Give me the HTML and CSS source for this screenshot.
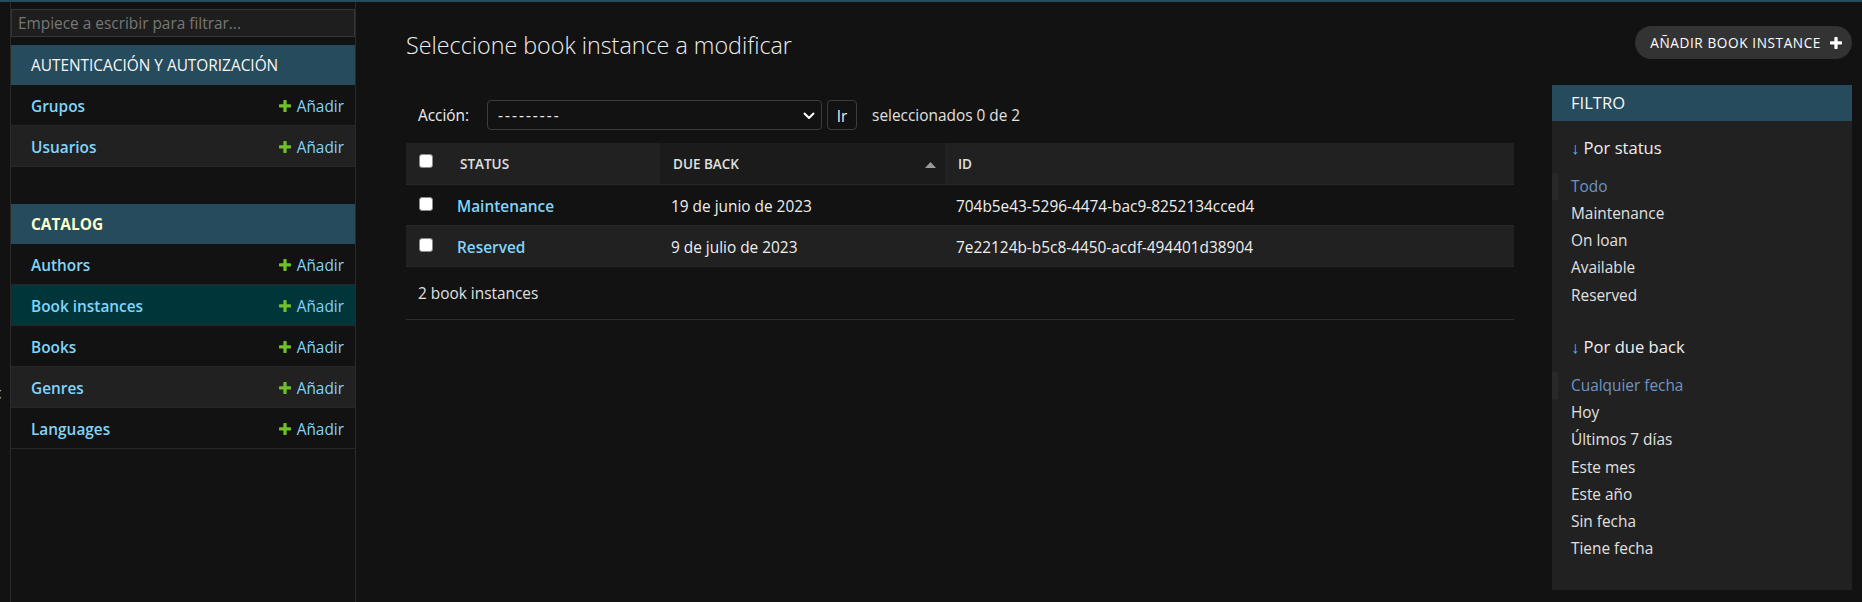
FILE: index.html
```html
<!DOCTYPE html>
<html lang="es">
<head>
<meta charset="utf-8">
<title>Seleccione book instance a modificar</title>
<link rel="stylesheet" href="styles.css">
</head>
<body>
<div class="topbar"></div>
<div class="page">
  <div class="nav-toggle"><span class="toggle-glyph">«</span></div>
  <nav class="sidebar">
    <input class="nav-filter" type="search" placeholder="Empiece a escribir para filtrar...">
    <div class="module">
      <div class="caption">AUTENTICACIÓN Y AUTORIZACIÓN</div>
      <div class="mrow"><a class="model">Grupos</a><a class="addlink"><svg viewBox="192 192 1408 1408"><path d="M1600 796v192q0 40-28 68t-68 28h-416v416q0 40-28 68t-68 28h-192q-40 0-68-28t-28-68v-416h-416q-40 0-68-28t-28-68v-192q0-40 28-68t68-28h416v-416q0-40 28-68t68-28h192q40 0 68 28t28 68v416h416q40 0 68 28t28 68z"/></svg>Añadir</a></div>
      <div class="mrow"><a class="model">Usuarios</a><a class="addlink"><svg viewBox="192 192 1408 1408"><path d="M1600 796v192q0 40-28 68t-68 28h-416v416q0 40-28 68t-68 28h-192q-40 0-68-28t-28-68v-416h-416q-40 0-68-28t-28-68v-192q0-40 28-68t68-28h416v-416q0-40 28-68t68-28h192q40 0 68 28t28 68v416h416q40 0 68 28t28 68z"/></svg>Añadir</a></div>
    </div>
    <div class="module">
      <div class="caption current">CATALOG</div>
      <div class="mrow"><a class="model">Authors</a><a class="addlink"><svg viewBox="192 192 1408 1408"><path d="M1600 796v192q0 40-28 68t-68 28h-416v416q0 40-28 68t-68 28h-192q-40 0-68-28t-28-68v-416h-416q-40 0-68-28t-28-68v-192q0-40 28-68t68-28h416v-416q0-40 28-68t68-28h192q40 0 68 28t28 68v416h416q40 0 68 28t28 68z"/></svg>Añadir</a></div>
      <div class="mrow current"><a class="model">Book instances</a><a class="addlink"><svg viewBox="192 192 1408 1408"><path d="M1600 796v192q0 40-28 68t-68 28h-416v416q0 40-28 68t-68 28h-192q-40 0-68-28t-28-68v-416h-416q-40 0-68-28t-28-68v-192q0-40 28-68t68-28h416v-416q0-40 28-68t68-28h192q40 0 68 28t28 68v416h416q40 0 68 28t28 68z"/></svg>Añadir</a></div>
      <div class="mrow"><a class="model">Books</a><a class="addlink"><svg viewBox="192 192 1408 1408"><path d="M1600 796v192q0 40-28 68t-68 28h-416v416q0 40-28 68t-68 28h-192q-40 0-68-28t-28-68v-416h-416q-40 0-68-28t-28-68v-192q0-40 28-68t68-28h416v-416q0-40 28-68t68-28h192q40 0 68 28t28 68v416h416q40 0 68 28t28 68z"/></svg>Añadir</a></div>
      <div class="mrow"><a class="model">Genres</a><a class="addlink"><svg viewBox="192 192 1408 1408"><path d="M1600 796v192q0 40-28 68t-68 28h-416v416q0 40-28 68t-68 28h-192q-40 0-68-28t-28-68v-416h-416q-40 0-68-28t-28-68v-192q0-40 28-68t68-28h416v-416q0-40 28-68t68-28h192q40 0 68 28t28 68v416h416q40 0 68 28t28 68z"/></svg>Añadir</a></div>
      <div class="mrow"><a class="model">Languages</a><a class="addlink"><svg viewBox="192 192 1408 1408"><path d="M1600 796v192q0 40-28 68t-68 28h-416v416q0 40-28 68t-68 28h-192q-40 0-68-28t-28-68v-416h-416q-40 0-68-28t-28-68v-192q0-40 28-68t68-28h416v-416q0-40 28-68t68-28h192q40 0 68 28t28 68v416h416q40 0 68 28t28 68z"/></svg>Añadir</a></div>
    </div>
  </nav>
  <main class="content">
    <div class="content-head">
      <h1>Seleccione book instance a modificar</h1>
      <a class="addbtn">Añadir book instance<svg viewBox="192 192 1408 1408"><path d="M1600 796v192q0 40-28 68t-68 28h-416v416q0 40-28 68t-68 28h-192q-40 0-68-28t-28-68v-416h-416q-40 0-68-28t-28-68v-192q0-40 28-68t68-28h416v-416q0-40 28-68t68-28h192q40 0 68 28t28 68v416h416q40 0 68 28t28 68z"/></svg></a>
    </div>
    <div class="changelist">
      <div class="cl-main">
        <div class="actions">
          <label class="act-label">Acción:</label>
          <span class="select-wrap">
            <select class="act-select"><option>---------</option></select>
            <svg class="chevron" viewBox="0 0 12 7"><polyline points="1,1 6,6 11,1"/></svg>
          </span>
          <button class="go">Ir</button>
          <span class="counter">seleccionados 0 de 2</span>
        </div>
        <table class="results">
          <colgroup><col class="c-cb"><col class="c-status"><col class="c-due"><col></colgroup>
          <thead>
            <tr>
              <th class="cb-cell"><input type="checkbox" class="cb"></th>
              <th class="th-status">Status</th>
              <th class="sorted"><div class="th-sort"><span>Due back</span><svg class="sort-arrow" viewBox="0 0 11 6"><polygon points="0,6 5.5,0 11,6"/></svg></div></th>
              <th>ID</th>
            </tr>
          </thead>
          <tbody>
            <tr>
              <td class="cb-cell"><input type="checkbox" class="cb"></td>
              <td class="link">Maintenance</td>
              <td>19 de junio de 2023</td>
              <td>704b5e43-5296-4474-bac9-8252134cced4</td>
            </tr>
            <tr>
              <td class="cb-cell"><input type="checkbox" class="cb"></td>
              <td class="link">Reserved</td>
              <td>9 de julio de 2023</td>
              <td>7e22124b-b5c8-4450-acdf-494401d38904</td>
            </tr>
          </tbody>
        </table>
        <p class="paginator">2 book instances</p>
      </div>
      <aside class="filter">
        <h2 class="filter-title">FILTRO</h2>
        <h3 class="filter-h"><span class="arrow">↓</span> Por status</h3>
        <ul class="filter-list">
          <li class="selected">Todo</li>
          <li>Maintenance</li>
          <li>On loan</li>
          <li>Available</li>
          <li>Reserved</li>
        </ul>
        <h3 class="filter-h"><span class="arrow">↓</span> Por due back</h3>
        <ul class="filter-list">
          <li class="selected">Cualquier fecha</li>
          <li>Hoy</li>
          <li>Últimos 7 días</li>
          <li>Este mes</li>
          <li>Este año</li>
          <li>Sin fecha</li>
          <li>Tiene fecha</li>
        </ul>
      </aside>
    </div>
  </main>
</div>
</body>
</html>
```
FILE: styles.css
```css
* { box-sizing: border-box; }
html, body { margin: 0; padding: 0; }
body {
  background: #121212;
  color: #eeeeee;
  font-family: "Open Sans", "Noto Sans", sans-serif;
  font-size: 15.4px;
  overflow: hidden;
}
a { text-decoration: none; }

.topbar { height: 2px; background: #264b5d; }
.page { display: flex; height: 600px; }

.nav-toggle {
  flex: 0 0 11px;
  border-right: 1px solid #2a2a2a;
  overflow: hidden;
  color: #81d4fa;
}
.toggle-glyph {
  display: block;
  margin-top: 378px;
  margin-left: -9px;
  font-size: 22px;
  line-height: 22px;
}

.sidebar { flex: 0 0 345px; border-right: 1px solid #2a2a2a; }
.nav-filter {
  display: block;
  width: 100%;
  height: 28px;
  margin: 7px 0 8px;
  padding: 1px 6px 0;
  background: #1e1e1e;
  border: 1px solid #353535;
  color: #eeeeee;
  font-family: inherit;
  font-size: 15.4px;
  outline: none;
  -webkit-appearance: none;
  appearance: none;
}
.nav-filter::placeholder { color: #777777; }

.module { margin-bottom: 37px; }
.caption {
  height: 40px;
  padding: 2px 20px 0;
  line-height: 38px;
  background: #264b5d;
  color: #f7f7f7;
}
.caption.current { color: #ffffcc; font-weight: 700; }
.mrow {
  display: flex;
  justify-content: space-between;
  height: 41px;
  padding: 4px 11px 0 20px;
  line-height: 36px;
  border-bottom: 1px solid #272727;
}
.mrow:nth-child(odd) { background: #212121; }
.mrow.current { background: #00363a; }
.model { color: #81d4fa; font-weight: 600; }
.addlink { color: #81d4fa; }
.addlink svg {
  width: 12px;
  height: 12px;
  margin-right: 6px;
  fill: #70bf2b;
  vertical-align: baseline;
}

.content { flex: 1; min-width: 0; padding: 24px 10px 0 50px; }
.content-head {
  display: flex;
  justify-content: space-between;
  align-items: flex-start;
  height: 33px;
  margin-bottom: 26px;
}
.content-head h1 {
  margin: 4px 0 0;
  font-size: 23.3px;
  line-height: 30px;
  font-weight: 300;
  color: #eeeeee;
}
.addbtn {
  display: flex;
  align-items: center;
  height: 33px;
  padding: 0 10px 0 15px;
  border-radius: 17px;
  background: #333333;
  color: #ffffff;
  font-size: 13.6px;
  letter-spacing: 0.6px;
  text-transform: uppercase;
}
.addbtn svg { width: 12px; height: 12px; margin-left: 9px; fill: #ffffff; }

.changelist { display: flex; align-items: flex-start; gap: 38px; }
.cl-main { flex: 1; min-width: 0; }

.actions {
  display: flex;
  align-items: center;
  padding: 15px 12px 13px;
  height: 58px;
}
.act-label { color: #eeeeee; padding-top: 1px; }
.select-wrap { position: relative; display: inline-flex; margin-left: 18px; }
.act-select {
  width: 335px;
  height: 30px;
  padding: 0 10px;
  background: #121212;
  color: #eeeeee;
  border: 1px solid #3c3c3c;
  border-radius: 4px;
  font-family: inherit;
  font-size: 15.4px;
  letter-spacing: 2px;
  -webkit-appearance: none;
  appearance: none;
}
.chevron {
  position: absolute;
  right: 7px;
  top: 12px;
  width: 12px;
  height: 7px;
  fill: none;
  stroke: #ffffff;
  stroke-width: 2;
  pointer-events: none;
}
.go {
  margin-left: 5px;
  width: 30px;
  height: 30px;
  padding: 2px 0 0;
  background: #121212;
  color: #eeeeee;
  border: 1px solid #3c3c3c;
  border-radius: 4px;
  font-family: inherit;
  font-size: 15.4px;
}
.counter { margin-left: 15px; color: #e0e0e0; padding-top: 1px; }

.results {
  width: 100%;
  table-layout: fixed;
  border-collapse: collapse;
}
.c-cb { width: 40px; }
.c-status { width: 214px; }
.c-due { width: 285px; }
.results th {
  height: 41px;
  padding: 2px 13px 0;
  text-align: left;
  background: #212121;
  color: #e0e0e0;
  font-size: 13.5px;
  font-weight: 600;
  line-height: 38px;
  text-transform: uppercase;
  border-bottom: 1px solid #272727;
}
.results th.th-status { padding-left: 14px; }
.results th.sorted { background: #1b1b1b; padding-right: 9px; }
.th-sort { display: flex; justify-content: space-between; align-items: center; }
.sort-arrow { width: 11px; height: 6px; fill: #9a9a9a; margin-top: 1px; }
.results td {
  height: 41px;
  padding: 12px 11px 8px;
  line-height: 20px;
  color: #eeeeee;
  border-bottom: 1px solid #272727;
  white-space: nowrap;
}
.results tbody tr:nth-child(even) td { background: #212121; }
.results .cb-cell { padding: 11px 0 0 13px; vertical-align: top; line-height: 14px; }
.results td.cb-cell { padding-top: 12px; }
.results td.link { color: #81d4fa; font-weight: 600; }
.cb {
  display: block;
  width: 14px;
  height: 14px;
  margin: 0;
  background: #ffffff;
  border: 1px solid #8a8a8a;
  border-radius: 3px;
  -webkit-appearance: none;
  appearance: none;
}

.paginator {
  margin: 0;
  padding: 13px 12px 11.5px;
  line-height: 27.5px;
  color: #e0e0e0;
  border-bottom: 1px solid #2e2e2e;
}

.filter { flex: 0 0 300px; background: #212121; }
.filter-title {
  margin: 0;
  height: 36px;
  line-height: 36px;
  padding: 0 19px;
  background: #264b5d;
  color: #f7f7f7;
  font-size: 16.6px;
  font-weight: 400;
}
.filter-h {
  margin: 15.5px 0 13px;
  padding: 0 19px;
  font-size: 16.6px;
  line-height: 22px;
  font-weight: 400;
  color: #eeeeee;
}
.arrow { font-family: "Liberation Sans", sans-serif; color: #4fc3f7; }
.filter-list {
  list-style: none;
  margin: 0 0 27px;
  padding: 0 19px;
}
.filter-list li { line-height: 27.25px; color: #e0e0e0; }
.filter-list li.selected {
  margin-left: -19px;
  padding-left: 13px;
  border-left: 6px solid #292929;
  color: #6f94c6;
}
```
